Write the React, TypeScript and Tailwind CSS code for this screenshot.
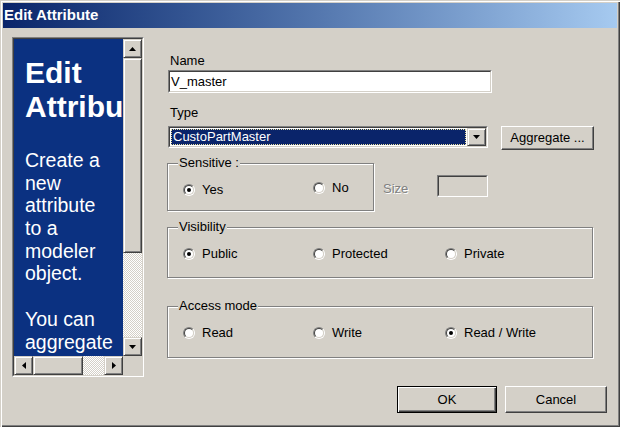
import React from "react";

type Dir = "up" | "down" | "left" | "right";

const Tri = ({ dir }: { dir: Dir }) => {
  if (dir === "up" || dir === "down") {
    return (
      <svg width="7" height="4" viewBox="0 0 7 4">
        <polygon points={dir === "up" ? "3.5,0 7,4 0,4" : "0,0 7,0 3.5,4"} fill="#000" />
      </svg>
    );
  }
  return (
    <svg width="4" height="7" viewBox="0 0 4 7">
      <polygon points={dir === "left" ? "4,0 4,7 0,3.5" : "0,0 0,7 4,3.5"} fill="#000" />
    </svg>
  );
};

const scrollPart =
  "flex items-center justify-center bg-[#d4d0c8] border border-t-[#d4d0c8] border-l-[#d4d0c8] border-r-[#404040] border-b-[#404040] shadow-[inset_1px_1px_0_#fff,inset_-1px_-1px_0_#808080]";
const track = "bg-[repeating-conic-gradient(#ffffff_0%_25%,#d4d0c8_0%_50%)] bg-[length:2px_2px]";
const sunkenOuter = "border border-t-[#808080] border-l-[#808080] border-r-white border-b-white";
const sunkenInner = "border border-t-[#404040] border-l-[#404040] border-r-[#d4d0c8] border-b-[#d4d0c8]";
const button =
  "flex items-center justify-center bg-[#d4d0c8] border border-t-white border-l-white border-r-[#404040] border-b-[#404040] shadow-[inset_-1px_-1px_0_#808080]";

const Radio = ({ checked = false }: { checked?: boolean }) => (
  <span className={`flex h-3 w-3 shrink-0 rounded-full ${sunkenOuter}`}>
    <span className={`flex h-full w-full items-center justify-center rounded-full bg-white ${sunkenInner}`}>
      {checked && <span className="h-1 w-1 rounded-full bg-black" />}
    </span>
  </span>
);

const RadioItem = ({ label, checked, wide }: { label: string; checked?: boolean; wide?: boolean }) => (
  <label className={`flex shrink-0 items-center gap-[7px] leading-[16px] ${wide ? "w-[132px]" : "w-[130px]"}`}>
    <Radio checked={checked} />
    <span>{label}</span>
  </label>
);

const GroupBox = ({ label, className, children }: { label: string; className: string; children: React.ReactNode }) => (
  <div className={`relative border border-[#808080] shadow-[inset_1px_1px_0_#fff,1px_1px_0_#fff] ${className}`}>
    <span className="absolute -top-[9px] left-[10px] bg-[#d4d0c8] px-[1px] leading-[15px]">{label}</span>
    <div className="flex pl-[15px] pt-[18px]">{children}</div>
  </div>
);

const helpLines = ["Create a", "new", "attribute", "to a", "modeler", "object.", "", "You can", "aggregate"];

const HelpPanel = () => (
  <div className={`flex h-[340px] w-[132px] shrink-0 flex-col ${sunkenOuter}`}>
    <div className={`flex min-h-0 flex-1 flex-col ${sunkenInner}`}>
      <div className="flex min-h-0 flex-1">
        <div className="min-w-0 flex-1 overflow-hidden bg-[#0b3181] pl-[11px] pt-[17px] text-white">
          <div className="whitespace-nowrap text-[30px] font-bold leading-[34px]">
            <div>Edit</div>
            <div>Attribute</div>
          </div>
          <div className="mt-[25px] whitespace-nowrap text-[19.5px] leading-[22.7px]">
            {helpLines.map((line, i) => (
              <div key={i} className="h-[22.7px]">
                {line}
              </div>
            ))}
          </div>
        </div>
        <div className="flex w-[19px] flex-col">
          <div className={`h-[19px] ${scrollPart}`}>
            <Tri dir="up" />
          </div>
          <div className={`h-[195px] ${scrollPart}`} />
          <div className={`flex-1 ${track}`} />
          <div className={`h-[19px] ${scrollPart}`}>
            <Tri dir="down" />
          </div>
        </div>
      </div>
      <div className="flex h-[19px]">
        <div className={`w-[19px] ${scrollPart}`}>
          <Tri dir="left" />
        </div>
        <div className={`w-[50px] ${scrollPart}`} />
        <div className={`flex-1 ${track}`} />
        <div className={`w-[19px] ${scrollPart}`}>
          <Tri dir="right" />
        </div>
        <div className="w-[19px] bg-[#d4d0c8]" />
      </div>
    </div>
  </div>
);

export default function App() {
  return (
    <div className="h-[427px] w-[620px] bg-[#d4d0c8] p-[3px] font-['Liberation_Sans',Arial,sans-serif] text-[13px] text-black shadow-[inset_1px_1px_0_#d4d0c8,inset_2px_2px_0_#fff,inset_-1px_-1px_0_#404040,inset_-2px_-2px_0_#808080]">
      <div className="flex h-[25px] items-center bg-gradient-to-r from-[#0a246a] to-[#a6caf0] pl-[1px] text-[15px] font-bold text-white">
        Edit Attribute
      </div>

      <div className="flex items-start pl-[9px] pt-[9px]">
        <HelpPanel />

        <div className="ml-[23px] flex w-[440px] flex-col">
          <div className="mt-[16px] pl-[3px] leading-[15px]">Name</div>
          <div className={`ml-[1px] mt-[2px] flex h-[23px] w-[324px] ${sunkenOuter}`}>
            <div className={`flex flex-1 items-center bg-white pl-[1px] ${sunkenInner}`}>V_master</div>
          </div>

          <div className="mt-[12px] pl-[3px] leading-[15px]">Type</div>
          <div className="mt-[6px] flex h-[24px] items-start">
            <div className={`ml-[1px] flex h-[22px] w-[320px] ${sunkenOuter}`}>
              <div className={`flex flex-1 bg-white ${sunkenInner}`}>
                <div className="m-[1px] flex flex-1 items-center border border-dotted border-[#e8e0a0] bg-[#0a246a] pl-[1px] text-white">
                  CustoPartMaster
                </div>
                <div className={`w-[19px] ${scrollPart}`}>
                  <Tri dir="down" />
                </div>
              </div>
            </div>
            <div className={`ml-[13px] h-[24px] w-[93px] ${button}`}>Aggregate ...</div>
          </div>

          <div className="mt-[13px] flex items-start">
            <GroupBox label="Sensitive :" className="h-[48px] w-[207px]">
              <RadioItem label="Yes" checked />
              <div className="-mt-[2px]">
                <RadioItem label="No" />
              </div>
            </GroupBox>
            <span className="ml-[9px] mt-[18px] leading-[15px] text-[#808080] [text-shadow:1px_1px_0_#fff]">Size</span>
            <div className={`ml-[29px] mt-[12px] flex h-[22px] w-[51px] ${sunkenOuter}`}>
              <div className={`flex-1 bg-[#d4d0c8] ${sunkenInner}`} />
            </div>
          </div>

          <GroupBox label="Visibility" className="mt-[16px] h-[51px] w-[426px]">
            <RadioItem label="Public" checked />
            <RadioItem label="Protected" wide />
            <RadioItem label="Private" />
          </GroupBox>

          <GroupBox label="Access mode" className="mt-[28px] h-[52px] w-[426px]">
            <RadioItem label="Read" />
            <RadioItem label="Write" wide />
            <RadioItem label="Read / Write" checked />
          </GroupBox>

          <div className="mt-[28px] flex justify-end gap-[8px]">
            <div className="h-[27px] w-[100px] border border-black">
              <div className="flex h-full items-center justify-center bg-[#d4d0c8] shadow-[inset_1px_1px_0_#fff,inset_-1px_-1px_0_#404040,inset_-2px_-2px_0_#808080]">
                OK
              </div>
            </div>
            <div className={`h-[27px] w-[102px] ${button}`}>Cancel</div>
          </div>
        </div>
      </div>
    </div>
  );
}
